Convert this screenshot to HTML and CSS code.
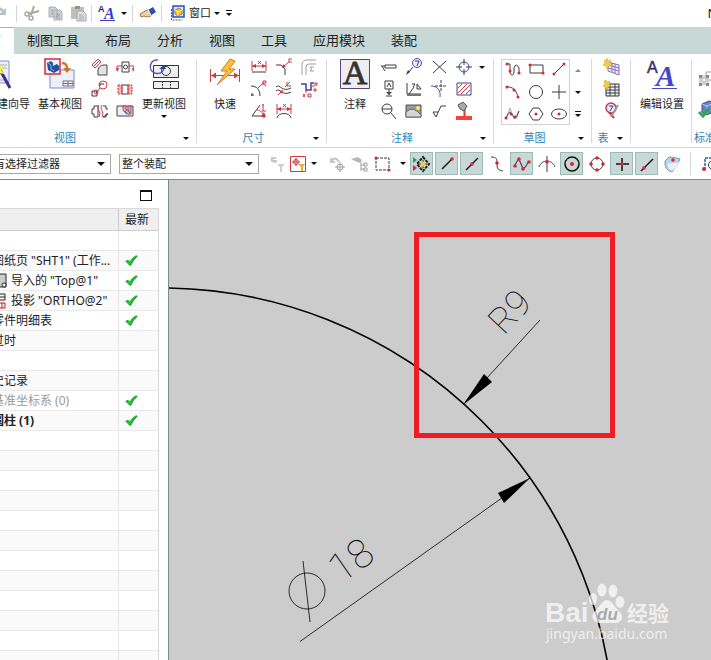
FILE: index.html
```html
<!DOCTYPE html>
<html lang="zh-CN">
<head>
<meta charset="utf-8">
<meta name="viewport" content="width=device-width, initial-scale=1">
<title>制图</title>
<link rel="stylesheet" href="styles.css">
</head>
<body>
<div class="app">
  <header class="quick">
    <button class="tool undo" aria-label="撤销"><svg width="18" height="18"><path d="M0 9C3 4 8 3 12 7" fill="none" stroke="#b9c2cc" stroke-width="3"/><path d="M7 11h8V4z" fill="#b9c2cc"/></svg></button>
    <i class="sep"></i>
    <button class="tool" aria-label="剪切"><svg width="18" height="18"><path d="M11 2 8 11M16 7 5 10" fill="none" stroke="#aaa79c" stroke-width="2"/><circle cx="4" cy="10" r="2" fill="none" stroke="#aaa79c" stroke-width="1.4"/><circle cx="8" cy="14" r="2" fill="none" stroke="#aaa79c" stroke-width="1.4"/></svg></button>
    <button class="tool" aria-label="复制"><svg width="18" height="18"><path d="M3 3h6l2 2v8H3zM8 6h6l2 2v8H8z" fill="#d0d1d4" stroke="#acaeb2"/><path d="M5 6h2M5 8h2M5 10h2M10 10h4M10 12h4M10 14h4" stroke="#9d9fa4"/></svg></button>
    <button class="tool" aria-label="粘贴"><svg width="18" height="18"><path d="M2 3h13v12H2z" fill="#c2bfb7"/><path d="M6 2h5v3H6z" fill="#96948f"/><path d="M8 7h6l3 3v7H8z" fill="#dddee1" stroke="#a6a8ad"/><path d="M10 11h4M10 13h5M10 15h5" stroke="#a6a8ad"/></svg></button>
    <i class="sep"></i>
    <button class="tool" aria-label="文本样式"><svg width="18" height="18"><path d="M2 16.500h15" stroke="#3a3ac8"/><text x="0" y="8" class="aa-small">A</text><text x="6" y="15" class="aa-big">A</text></svg></button>
    <button class="drop" aria-label="更多样式"></button>
    <i class="sep"></i>
    <button class="tool" aria-label="触摸"><svg width="18" height="18"><path d="m1 10 7-4 4 1v5l-4 1-3-1-3 1z" fill="#edcfa0" stroke="#a57b4b"/><path d="m9 6 5-3 3 5-6 4z" fill="#2e4fae"/><path d="m9 6 3 6" stroke="#eee" stroke-width="1.500"/></svg></button>
    <i class="sep"></i>
    <button class="tool" aria-label="窗口图标"><svg width="18" height="18"><path d="M3.500 5v11h11" fill="none" stroke="#555" stroke-dasharray="2 1"/><path d="M5 2h11v11H5z" fill="#dbe8ff" stroke="#1d4ee0" stroke-width="1.500"/><path d="m7 6 4-2 3 2v4l-4 2-3-2z" fill="#f5bd35" stroke="#b77c0b"/><path d="m7 6 3 2 4-2M10 8v4" stroke="#fff2ae" fill="none"/></svg></button>
    <button class="label">窗口</button>
    <button class="drop" aria-label="窗口菜单"></button>
    <button class="drop bar" aria-label="自定义"></button>
    <span class="app-name">NX</span>
  </header>

  <nav class="tabs">
    <a href="#" class="active" aria-label="主页">页</a>
    <a href="#">制图工具</a>
    <a href="#">布局</a>
    <a href="#">分析</a>
    <a href="#">视图</a>
    <a href="#">工具</a>
    <a href="#">应用模块</a>
    <a href="#">装配</a>
  </nav>

  <section class="ribbon">
    <div class="group g-view">
      <div class="body">
        <button class="big wizard"><svg width="32" height="32"><path d="M4 3h24v22H4z" fill="#eceff8" stroke="#8790c8"/><path d="M18 7h8M18 10h8M18 22h8" stroke="#aaa"/><path d="m18 10 11 20" stroke="#36348e" stroke-width="3"/><path d="m17 3 1 6 6-2-4 5 4 4-6-1-2 5-2-6-6-1 5-4z" fill="#fbf24a"/></svg><span>视图创建向导</span></button>
        <button class="big"><svg width="32" height="32"><path d="M6 12h24v18H6z" fill="#edf0fa" stroke="#8289c2"/><path d="M19 23h10v5H19zM19 25.500h10M24 23v5" fill="none" stroke="#777"/><path d="M1 1h15v15H1z" fill="#eef0f8" stroke="#d12d38" stroke-width="1.500"/><path d="m3 5 4-2 2 2v3l4-2 2 2v4l-5 3-6-3z" fill="#24509e"/><path d="m4 5 3 2v4l3 2" fill="none" stroke="#8bb1e9"/><path d="M18 5c4 0 5 2 5 6" fill="none" stroke="#cf722d" stroke-width="2.500"/><path d="M19 10h8l-4 5z" fill="#cf722d"/></svg><span>基本视图</span></button>
        <div class="smalls two">
          <button aria-label="投影视图"><svg width="18" height="18"><path class="r" d="m1 7 6-6 3 3-6 6zM3 8l5-5"/><path d="M7 17v-5q1-5 6-5h3v10z" fill="#e3e3e3" stroke="#444"/></svg></button>
          <button aria-label="剖视图"><svg width="18" height="18"><path class="k" d="M6 4h7v10H6z"/><circle class="k" cx="9.500" cy="9" r="2"/><path class="r" d="M1 13V8h5M18 13V8h-5"/><path d="M0 10h3l-1.500 4zM16 10h3l-2 4z" fill="#cf3c43"/></svg></button>
          <button aria-label="局部放大图"><svg width="18" height="18"><circle class="r" cx="12" cy="5" r="4"/><path class="r" d="m9 8-4 5"/><path class="k" d="M1 11h5v5H1zM9 6V4h4"/><circle cx="5" cy="12" r="2" class="r"/></svg></button>
          <button aria-label="断开视图"><svg width="18" height="18"><path d="M2 5h4v9H2zM12 5h4v9h-4z" fill="#f5b3b2" stroke="#cc333b" stroke-dasharray="2 1"/><path class="k" d="M6 5h6M6 14h6"/><path class="r" d="M6 5v9M12 5v9"/></svg></button>
          <button aria-label="断裂视图"><svg width="18" height="18"><path class="k" d="M1 7h2V4h4v11H3v-3H1zM17 7h-2V4h-3M12 15h3v-3h2z"/><path class="r" d="M8 3c-3 5 3 6 0 12M11 3c-3 5 3 6 0 12"/></svg></button>
          <button aria-label="局部剖视图"><svg width="18" height="18"><path d="M1 4h16v10H1z" fill="#eee" stroke="#444"/><path d="M7 4c-1 5 3 9 8 8V4h-3v4h-2V4z" fill="#b7bfe9" stroke="#cb353c"/><path d="m9 9 2 3M12 8l2 3" stroke="#374896"/></svg></button>
        </div>
        <button class="big menu"><svg width="32" height="32"><path d="M5.500 7.500h25v12h-25zM5.500 23.500h25v7h-25z" fill="#eee" stroke="#333"/><circle class="k" cx="18" cy="13" r="4.500"/><path class="k" d="M14.500 23v7M22.500 23v7" stroke-dasharray="2 1"/><path d="M10 2C2 1-1 12 7 15c6 2 9-2 9-6" fill="none" stroke="#5d56bc" stroke-width="1.500"/><path d="M11 11h7l-2-4z" fill="#26438e"/></svg><span>更新视图</span></button>
      </div>
      <div class="foot"><span>视图</span><button class="drop" aria-label="视图选项"></button></div>
    </div>

    <div class="group g-dim">
      <div class="body">
        <button class="big"><svg width="32" height="32"><path class="r" d="M1.500 11v13M30.500 11v13M2 17.500h28"/><path d="m2 17.500 5-3v6zM30 17.500l-5-3v6z" fill="#ce3c44"/><path d="M21 1 12 13h6L8 27l18-16h-6l6-8z" fill="#fbc42e" stroke="#d4773b"/></svg><span>快速</span></button>
        <div class="smalls three">
          <button aria-label="线性"><svg width="18" height="18"><path class="r" d="M2 3v10M16 3v10M2 8h14"/><path d="m2 8 4-2v4zM16 8l-4-2v4z" fill="#ca333b"/><path class="r" d="m8 3 3 3m0-3L8 6"/><path class="k" d="M2 14h14"/></svg></button>
          <button aria-label="倒斜角"><svg width="18" height="18"><path class="k" d="M1 7h5l4 4v6"/><path class="r" d="m8 9 6-5h3M17 1h-3v3"/><path d="m7 10 1-4 3 3z" fill="#ca333b"/></svg></button>
          <button aria-label="厚度"><svg width="18" height="18"><path class="g" d="M2 17V7q0-5 5-5h9M6 17V9q0-3 3-3h7M14 9h-4l2 2-2 2h4"/></svg></button>
          <button aria-label="径向"><svg width="18" height="18"><path class="k" d="M1 6c6 0 9 4 9 10M2 13v3M1 15h3"/><path class="r" d="m8 8 5-5M13 5V1h3v2h-3l3 3"/></svg></button>
          <button aria-label="弧长"><svg width="18" height="18"><path class="k" d="M1 7c4-4 6 6 15 1M1 11c4-4 6 6 15 1"/><path class="r" d="m3 15 4-4m3-4 5-5M12 2v4h4"/><path d="m5 11 3-1-1 4z" fill="#ca333b"/></svg></button>
          <button aria-label="坐标"><svg width="18" height="18"><path d="M1 4h5v6h5V3h3" fill="none" stroke="#463fa4" stroke-width="1.500"/><path class="r" d="M12 6h3M6 10v3M11 7v3M3 14l2 3m0-3-2 3M8 14h3v3H8zM15 3h2v2h-2zM14 9h2v2h-2z"/></svg></button>
          <button aria-label="角度"><svg width="18" height="18"><path class="k" d="M10 3 2 14h11"/><path class="r" d="M7 8c4 0 6 3 7 8M13 2v7M12 3h2M12 9h4"/><path d="m11 15 3-5 2 5z" fill="#ca333b"/></svg></button>
          <button aria-label="弧长尺寸"><svg width="18" height="18"><path class="k" d="M2 16c1-6 13-6 14 0"/><path class="r" d="M2 2v10M16 2v10M2 7h14M8 2l3 3m0-3L8 5"/><path d="m2 7 4-2v4zM16 7l-4-2v4z" fill="#ca333b"/></svg></button>
        </div>
      </div>
      <div class="foot"><span>尺寸</span><button class="drop" aria-label="尺寸选项"></button></div>
    </div>

    <div class="group g-note">
      <div class="body">
        <button class="big"><svg width="32" height="32"><path d="M1.500 1.500h29v29h-29z" fill="#eee" stroke="#554580"/><text x="16" y="26" text-anchor="middle" class="serif-a">A</text></svg><span>注释</span></button>
        <div class="smalls four">
          <button aria-label="指引线"><svg width="18" height="18"><path class="k" d="M5 7h11v3H5zM1 8h4M2 8l3 5"/></svg></button>
          <button aria-label="符号标注"><svg width="18" height="18"><circle cx="12" cy="5" r="4.500" fill="#eeeaff" stroke="#5549a0"/><path d="M10 3h4l-2 5" fill="none" stroke="#443591"/><path class="k" d="m8 9-5 6"/><path d="m1 17 2-5 2 2z" fill="#333"/></svg></button>
          <button aria-label="目标点"><svg width="18" height="18"><path class="k" d="m3 3 13 12M16 3 3 15"/></svg></button>
          <button aria-label="中心标记"><svg width="18" height="18"><circle cx="9" cy="9" r="5" fill="none" stroke="#2b53a3"/><path class="k" d="M9 1v6M9 11v6M1 9h6M11 9h6"/></svg></button>
          <button class="drop" aria-label="更多中心线"></button>
          <button aria-label="基准特征"><svg width="18" height="18"><path class="k" d="M5 1h8v8H5zM9 9v6M6 16h6"/><path d="M6 12h6l-3 3z" fill="#444"/><path class="k" d="m7 7 2-4 2 4"/></svg></button>
          <button aria-label="焊接符号"><svg width="18" height="18"><path class="k" d="M2 3v11h14M4 14l5-7M7 4h3l-2 3M12 9V4l4 5z"/><path d="M2 15h14" stroke="#777" stroke-width="2"/></svg></button>
          <button aria-label="相交符号"><svg width="18" height="18"><path d="M1 6c6 0 10 4 9 11" fill="none" stroke="#315bb0"/><path class="k" d="M11 0v12M5 6h12" stroke-dasharray="3 1"/></svg></button>
          <button aria-label="剖面线"><svg width="18" height="18"><path d="M2 3h14v12H2z" fill="#fff" stroke="#4b3e91"/><path class="r" d="m3 8 4-4M3 13l9-9M6 14 15 5M11 14l4-4"/></svg></button>
          <i></i>
          <button aria-label="放大"><svg width="18" height="18"><circle class="k" cx="7" cy="7" r="5"/><path class="k" d="M2 7h10m-1 4 5 6"/></svg></button>
          <button aria-label="图像"><svg width="18" height="18"><path d="M1 3h15v12H1z" fill="#999" stroke="#555"/><path d="M1 10q7-7 15 3v2H1z" fill="#d5d5d5" stroke="#666"/><circle cx="13" cy="6" r="2" fill="#ffec58"/></svg></button>
          <button aria-label="表面粗糙度"><svg width="18" height="18"><path class="k" d="m3 10 3 5L11 4h5M3 10h5"/></svg></button>
          <button aria-label="颜色"><svg width="18" height="18"><path d="M1 14h16v4H1z" fill="#f34340"/><path d="M9 7h1v7H9z" fill="#e33" stroke="#e33"/><path d="m3 3 5-3 4 4-3 5-4-2z" fill="#aaa" stroke="#555"/></svg></button>
        </div>
      </div>
      <div class="foot"><span>注释</span><button class="drop" aria-label="注释选项"></button></div>
    </div>

    <div class="group g-sketch">
      <div class="body">
        <div class="gallery">
          <button aria-label="轮廓"><svg width="18" height="18"><path class="k" d="M3 3h3v9q3 5 4-1V7q2-6 5 0v6"/><circle class="d" cx="3" cy="3" r="1.500"/><circle class="d" cx="6" cy="10" r="1.500"/><circle class="d" cx="15" cy="12" r="1.500"/></svg></button>
          <button aria-label="矩形"><svg width="18" height="18"><path class="k" d="M3 4h13v8H3z"/><circle class="d" cx="3" cy="4" r="1.500"/><circle class="d" cx="16" cy="12" r="1.500"/></svg></button>
          <button aria-label="直线"><svg width="18" height="18"><path class="k" d="M4 13 14 3"/><circle class="d" cx="4" cy="13" r="1.500"/><circle class="d" cx="14" cy="3" r="1.500"/></svg></button>
          <button aria-label="圆弧"><svg width="18" height="18"><path class="k" d="M2 4c7-1 11 4 12 11"/><circle class="d" cx="3" cy="4" r="1.500"/><circle class="d" cx="10" cy="7" r="1.500"/><circle class="d" cx="14" cy="14" r="1.500"/></svg></button>
          <button aria-label="圆"><svg width="18" height="18"><circle class="k" cx="9" cy="9" r="6.500"/></svg></button>
          <button aria-label="点"><svg width="18" height="18"><path class="k" d="M9 2v14M2 9h14"/></svg></button>
          <button aria-label="样条"><svg width="18" height="18"><path d="M2 14 6 3l4 11 5-8" fill="none" stroke="#aaa"/><path class="k" d="M2 14c4-12 5-5 8-2s3-2 5-6"/><circle class="d" cx="2" cy="13" r="1.500"/><circle class="d" cx="7" cy="9" r="1.500"/><circle class="d" cx="11" cy="12" r="1.500"/></svg></button>
          <button aria-label="多边形"><svg width="18" height="18"><path class="k" d="M6 3h6l4 6-4 6H6L2 9z"/><circle class="d" cx="9" cy="9" r="1.500"/></svg></button>
          <button aria-label="椭圆"><svg width="18" height="18"><ellipse class="k" cx="9" cy="9" rx="7.500" ry="5"/><circle class="d" cx="9" cy="9" r="1.500"/></svg></button>
        </div>
        <div class="scroller"><button class="drop up" aria-label="向上"></button><button class="drop" aria-label="向下"></button><button class="drop bar" aria-label="展开"></button></div>
      </div>
      <div class="foot"><span>草图</span><button class="drop" aria-label="草图选项"></button></div>
    </div>

    <div class="group g-table">
      <div class="body">
        <div class="smalls one">
          <button aria-label="表格注释"><svg width="18" height="18"><path d="m5 4 11 3v10L5 13z" fill="#eeeaf8" stroke="#8170a5"/><path d="m5 7 11 3M5 10l11 3M9 5v9M12 6v10" stroke="#8878b1"/><path class="star" d="m4 0 1 3 3-1-1 3 2 2-3 1-2 3-1-3-3-1 2-2-1-3 2 1z"/></svg></button>
          <button aria-label="零件明细表"><svg width="18" height="18"><path d="M3 4h13v12H3z" fill="#eaf1fb" stroke="#333"/><path class="k" d="M3 7h13M3 10h13M3 13h13M7 4v12M12 4v12"/><path class="star" d="m3 0 1 2 3-1-1 3 2 2-3 1-1 3-2-3-2-1 2-2-1-3z"/></svg></button>
          <button aria-label="自动符号标注"><svg width="18" height="18"><circle cx="8" cy="6" r="5" fill="#eeeaf7" stroke="#bf3d47" stroke-width="1.500"/><path d="M6 4h4L7 9" fill="none" stroke="#443591"/><path d="m6 10 5 6" stroke="#c23d45" stroke-width="2"/><path d="m15 3-7 12" stroke="#a79297" stroke-width="2"/></svg></button>
        </div>
      </div>
      <div class="foot"><span>表</span><button class="drop" aria-label="表选项"></button></div>
    </div>

    <div class="group g-edit">
      <div class="body">
        <button class="big"><svg width="32" height="32"><path d="M6 30.500h25" stroke="#4644cc"/><text x="1" y="15" class="edit-small">A</text><text x="10" y="28" class="edit-big">A</text></svg><span>编辑设置</span></button>
      </div>
      <div class="foot"></div>
    </div>

    <div class="group g-std">
      <div class="body">
        <div class="smalls std">
          <button aria-label="对象"><svg width="18" height="18"><path class="g" d="M2 6h8v8H2zM4 8h4v4H4zM8 5V2h9v8h-6"/><path d="M1 5h3v3H1zM8 5h3v3H8zM1 13h3v3H1zM8 13h3v3H8z" fill="#888"/></svg></button>
          <button aria-label="检查"><svg width="18" height="18"><path d="m4 4 7-3 5 2v9l-8 3-4-3z" fill="#6484cc" stroke="#354b91"/><path d="m4 4 5 2 7-3M9 6v8" fill="none" stroke="#b8c7ee"/><path d="m1 12 4 4 6-8" fill="none" stroke="#35a54c" stroke-width="3"/></svg></button>
        </div>
      </div>
      <div class="foot"><span>标准化工具</span></div>
    </div>
  </section>

  <section class="filters">
    <div class="combo first"><select aria-label="选择过滤器"><option>没有选择过滤器</option></select></div>
    <div class="combo second"><select aria-label="选择范围"><option>整个装配</option></select></div>
    <button class="filter" aria-label="重置过滤器"><svg width="18" height="18"><path class="p" d="M8 3H4v3h5M4 6l4 1" stroke-width="2"/><path d="M9 9h8l-3 3v5h-2v-5z" fill="#d0d0d0"/></svg></button>
    <button class="filter" aria-label="过滤方式"><svg width="18" height="18"><path d="M1.500 1.500h15v15h-15z" fill="#fff" stroke="#d03640"/><circle cx="7" cy="7" r="2.500" class="r"/><path class="r" d="M7 3v8M3 7h8"/><path d="M9 9h7l-2 3v4h-2v-4z" fill="#edae3c"/></svg></button>
    <button class="drop gap" aria-label="过滤选项"></button>
    <button class="filter" aria-label="返回"><svg width="18" height="18"><path class="p" d="M2 3v4h4M2 7q4-7 8 0" stroke-width="2"/><circle cx="11" cy="12" r="3" class="g"/><path class="g" d="M11 7v10M6 12h10"/></svg></button>
    <button class="filter" aria-label="查找"><svg width="18" height="18"><path d="m1 4 7-2 4 3-2 3-5-2z" fill="#b7b7b7"/><path class="g" d="M11 7v9M11 10h4M11 14h4M14 8h3v3h-3zM14 13h3v3h-3z"/></svg></button>
    <button class="filter wide" aria-label="矩形选择"><svg width="18" height="18"><path class="k" d="M2 3h13v12H2z" stroke-dasharray="3 1"/><circle class="d" cx="2" cy="3" r="1.500"/><circle class="d" cx="15" cy="15" r="1.500"/></svg></button>
    <button class="drop" aria-label="选择方式"></button>
    <button class="snap on" aria-label="启用捕捉"><svg width="18" height="18"><path d="m0 2 4 3-4 3z" fill="#1fa839"/><path d="m0 10 4 3-4 3z" fill="#d42a2a"/><path d="m10 2 6 7-6 7-6-7z" fill="none" stroke="#222" stroke-width="2" stroke-dasharray="3 1"/><path d="M10 5v8M6 9h8" stroke="#222"/><circle cx="10" cy="9" r="2.500" fill="#f4ce32"/></svg></button>
    <button class="snap on" aria-label="端点"><svg width="18" height="18"><path class="b" d="M4 14 14 4"/><circle class="d" cx="14" cy="4" r="1.800"/></svg></button>
    <button class="snap on" aria-label="中点"><svg width="18" height="18"><path class="b" d="M3 15 15 3"/><circle class="d" cx="9" cy="9" r="1.800"/></svg></button>
    <button class="snap" aria-label="控制点"><svg width="18" height="18"><path class="k" d="M3 2c6 0 6 2 6 7s1 6 6 7"/><circle class="d" cx="9" cy="8" r="1.800"/></svg></button>
    <button class="snap on" aria-label="极点"><svg width="18" height="18"><path d="m2 10 4-7 4 12 6-9" fill="none" stroke="#9048c5"/><path class="k" d="M2 11c3-9 4-6 7 0s5-3 7-5"/><circle class="d" cx="2" cy="11" r="1.800"/><circle class="d" cx="6" cy="4" r="1.800"/><circle class="d" cx="10" cy="14" r="1.800"/><circle class="d" cx="16" cy="7" r="1.800"/></svg></button>
    <button class="snap" aria-label="交点"><svg width="18" height="18"><path class="k" d="M9 1v16M1 12C4 4 14 4 17 12"/><circle class="d" cx="9" cy="7" r="1.800"/></svg></button>
    <button class="snap on" aria-label="圆心"><svg width="18" height="18"><circle class="b" cx="9" cy="9" r="7"/><circle class="d" cx="9" cy="9" r="2"/></svg></button>
    <button class="snap" aria-label="象限点"><svg width="18" height="18"><circle class="k" cx="9" cy="9" r="6"/><circle class="d" cx="9" cy="3" r="1.800"/><circle class="d" cx="15" cy="9" r="1.800"/><circle class="d" cx="9" cy="15" r="1.800"/><circle class="d" cx="3" cy="9" r="1.800"/></svg></button>
    <button class="snap on" aria-label="现有点"><svg width="18" height="18"><path class="b" d="M9 3v13M3 9h13"/><circle class="d" cx="9" cy="9" r="1.800"/></svg></button>
    <button class="snap on" aria-label="曲线上的点"><svg width="18" height="18"><path class="b" d="M3 16 15 4"/><circle class="d" cx="6" cy="13" r="1.800"/></svg></button>
    <button class="snap" aria-label="面上的点"><svg width="18" height="18"><path d="M2 6 6 2q6 0 11 2l-4 8-4 5Q1 15 2 6z" fill="#bdd2ef" stroke="#7695c7"/><path d="M5 8q5 1 11-1l-3 6-4 3q-5-2-4-8z" fill="#e7f0fb"/><circle class="d" cx="10" cy="5" r="1.800"/></svg></button>
    <i class="divider"></i>
    <button class="snap" aria-label="缩放"><svg width="18" height="18"><path d="M4 15V3h14" fill="none" stroke="#3355bb" stroke-width="1.500" stroke-dasharray="3 1"/><circle class="k" cx="12" cy="10" r="4.500"/><circle class="d" cx="3" cy="14" r="2"/></svg></button>
  </section>

  <main>
    <aside class="navigator">
      <div class="panel-head"><button aria-label="最大化"></button></div>
      <table>
        <thead><tr><th aria-label="名称"></th><th>最新</th></tr></thead>
        <tbody>
          <tr><td></td><td></td></tr>
          <tr><td><span class="name n1">图纸页 "SHT1" (工作...</span></td><td><svg class="ok" viewBox="0 0 16 16"><use href="#tick"/></svg></td></tr>
          <tr><td><span class="name n2"><svg width="8" height="16"><path d="M0 1h6v13H0" fill="#ccc" stroke="#222"/><circle cx="4" cy="12" r="2" fill="#fff" stroke="#222"/></svg>导入的 "Top@1"</span></td><td><svg class="ok" viewBox="0 0 16 16"><use href="#tick"/></svg></td></tr>
          <tr><td><span class="name n2"><svg width="8" height="16"><path d="M0 1h5v6H0M0 4h5" fill="#fff" stroke="#222"/><path d="M0 10h5v5H0M2 10v5" fill="#fff" stroke="#b61919"/></svg>投影 "ORTHO@2"</span></td><td><svg class="ok" viewBox="0 0 16 16"><use href="#tick"/></svg></td></tr>
          <tr><td><span class="name n3">零件明细表</span></td><td><svg class="ok" viewBox="0 0 16 16"><use href="#tick"/></svg></td></tr>
          <tr><td><span class="name n3">过时</span></td><td></td></tr>
          <tr><td></td><td></td></tr>
          <tr><td><span class="name n3">史记录</span></td><td></td></tr>
          <tr><td><span class="name n3 dim">基准坐标系 (0)</span></td><td><svg class="ok" viewBox="0 0 16 16"><use href="#tick"/></svg></td></tr>
          <tr><td><span class="name n1 strong">圆柱 (1)</span></td><td><svg class="ok" viewBox="0 0 16 16"><use href="#tick"/></svg></td></tr>
          <tr><td></td><td></td></tr><tr><td></td><td></td></tr><tr><td></td><td></td></tr><tr><td></td><td></td></tr>
          <tr><td></td><td></td></tr><tr><td></td><td></td></tr><tr><td></td><td></td></tr><tr><td></td><td></td></tr>
          <tr><td></td><td></td></tr><tr><td></td><td></td></tr><tr><td></td><td></td></tr><tr><td></td><td></td></tr>
        </tbody>
      </table>
      <svg width="0" height="0" class="defs"><defs><g id="tick"><path d="M1 9q3-3 5 1 3-6 8-8l1 1q-5 4-8 11H6z" fill="#1fcc35" stroke="#119123"/></g></defs></svg>
    </aside>
    <div class="sheet">
      <svg class="drawing" role="img" aria-label="半径与直径标注">
        <g transform="translate(-169 -180)">
          <circle cx="160.800" cy="741.500" r="453.600" fill="none" stroke="#000" stroke-width="1.600"/>
          <path class="thin" d="M540 320 465 402M300 641.500 530 478"/>
          <path d="m463 405 21-31 8 8zM530 478l-32 15 6 10z"/>
          <text class="cad r9" transform="translate(504 336) rotate(-47)">R9</text>
          <circle class="thin" cx="307" cy="591" r="18"/>
          <path class="thin" d="m303 561 7 61"/>
          <text class="cad" transform="translate(341 584) rotate(-35)">18</text>
          <path d="M416.500 234.500h196v201h-196z" fill="none" stroke="#ef1c24" stroke-width="5"/>
          <g class="mark">
            <text x="545" y="622" class="bai">Bai</text>
            <ellipse cx="593" cy="599" rx="4" ry="6"/><ellipse cx="602" cy="590" rx="4.500" ry="6.500"/><ellipse cx="613" cy="591" rx="4.500" ry="6.500"/><ellipse cx="620" cy="602" rx="4.500" ry="6"/>
            <path d="M607 600c-5 0-7 7-12 11-5 5-2 12 5 12h15c8 0 9-7 4-12-5-4-7-11-12-11z"/>
            <text x="597" y="620" class="du">du</text>
            <text x="627" y="621" class="jy">经验</text>
            <text x="546" y="639" class="url">jingyan.baidu.com</text>
          </g>
        </g>
      </svg>
    </div>
  </main>
</div>
</body>
</html>
```
FILE: styles.css
```css
* { box-sizing: border-box; }
body { margin: 0; background: #fff; color: #222; font: 12px/16px "Noto Sans", "Noto Sans CJK SC", sans-serif; }
button { display: flex; align-items: center; justify-content: center; flex: none; margin: 0; padding: 0; border: 0; background: none; color: inherit; font: inherit; }
svg { display: block; flex: none; }
a { color: inherit; text-decoration: none; }
.app { display: flex; flex-direction: column; height: 100vh; overflow: hidden; }

.k, .r, .g, .b, .p { fill: none; stroke: #3c3c3c; }
.r { stroke: #cc3b43; }
.g { stroke: #a0a0a0; }
.b { stroke: #111; stroke-width: 1.5; }
.p { stroke: #c6c6c6; }
.d { fill: #d8282c; }
.star { fill: #f4ca3e; stroke: #cfa02c; stroke-width: .5; }

.drop { width: 12px; height: 12px; }
.drop::before { content: ""; border: 3px solid transparent; border-top-color: #111; border-bottom: 0; }
.drop.bar { flex-direction: column; gap: 2px; }
.drop.bar::before { order: 2; }
.drop.bar::after { content: ""; width: 6px; height: 1px; background: #111; }
.drop.up::before { border-top: 0; border-bottom: 3px solid #888; }

.quick { display: flex; align-items: center; flex: none; height: 27px; padding-bottom: 1px; font-size: 11px; }
.tool { width: 23px; height: 24px; }
.tool.undo { width: 14px; justify-content: flex-end; overflow: hidden; padding-right: 5px; }
.sep { width: 1px; height: 17px; margin: 0 3px 0 2px; background: #d4d4d4; }
.quick .label { margin-left: 1px; }
.app-name { margin-left: auto; margin-right: -14px; font-size: 13px; }
.aa-small { font: bold 9px "Liberation Sans", sans-serif; fill: #2a2568; }
.aa-big { font: italic bold 16px "Liberation Serif", serif; fill: #3a3ac8; }

.tabs { display: flex; flex: none; height: 27px; background: #c8d8d6; font-size: 13px; line-height: 27px; gap: 26px; }
.tabs a { white-space: nowrap; }
.tabs .active { width: 14px; margin-right: -13px; background: #fff; color: #2b9bc9; text-indent: -12px; overflow: hidden; border-top: 1px solid #a9b4b3; }

.ribbon { display: flex; flex: none; height: 94px; border-bottom: 1px solid #d6d6d6; overflow: hidden; font-size: 11px; }
.group { position: relative; display: flex; flex-direction: column; flex: none; }
.group::after { content: ""; position: absolute; right: 0; top: 5px; bottom: 4px; width: 1px; background: #d9d9d9; }
.body { display: flex; align-items: flex-start; flex: 1; padding-top: 2px; }
.foot { display: flex; align-items: center; justify-content: center; height: 18px; color: #2b84b5; }
.foot span { flex: 1; text-align: center; white-space: nowrap; }
.foot .drop { margin-right: 5px; }
.big { flex-direction: column; width: 50px; padding-top: 2px; white-space: nowrap; gap: 6px; line-height: 16px; }
.big.wizard { width: 66px; margin-left: -36px; }
.big.menu::after { content: ""; margin-top: -3px; border: 3px solid transparent; border-top-color: #111; border-bottom: 0; }
.smalls { display: grid; grid-auto-rows: 22px; }
.smalls button { height: 22px; }
.two { grid-template-columns: 25px 25px; }
.three { grid-template-columns: 25px 25px 25px; }
.four { grid-template-columns: 25px 25px 25px 25px 12px; }
.one { grid-template-columns: 26px; }
.g-view { width: 197px; }
.g-view .body { gap: 2px; }
.g-view .big:nth-child(2) { margin-left: 3px; }
.g-view .foot { margin-left: -50px; }
.g-dim { width: 130px; }
.g-dim .body { padding-left: 3px; }
.g-dim .smalls { margin-left: -4px; }
.g-note { width: 167px; }
.g-note .body { padding-left: 3px; }
.g-note .smalls { margin-left: -4px; }
.g-sketch { width: 98px; }
.g-sketch .body { padding: 5px 0 0 7px; gap: 2px; }
.gallery { display: grid; grid-template: repeat(3, 22px) / repeat(3, 23px); width: 69px; height: 66px; box-shadow: inset 0 0 0 1px #d2d2d2; }
.scroller { display: grid; grid-auto-rows: 22px; align-items: center; }
.g-table { width: 39px; }
.g-table .body { padding-left: 7px; }
.g-edit { width: 61px; }
.g-edit .body { padding-left: 6px; }
.g-std::after { display: none; }
.g-std .body { padding: 10px 0 0 6px; }
.std { grid-auto-rows: 30px; align-items: center; }
.g-std .foot { padding-left: 2px; }
.serif-a { font: 34px "Liberation Serif", serif; fill: #333; stroke: #333; stroke-width: .8; }
.edit-small { font: 16px "Liberation Sans", sans-serif; fill: #3b306f; stroke: #3b306f; stroke-width: .5; }
.edit-big { font: italic bold 29px "Liberation Serif", serif; fill: #4644cc; }

.filters { display: flex; align-items: center; flex: none; height: 32px; border-bottom: 1px solid #7f8b8e; overflow: hidden; font-size: 11px; }
.combo { position: relative; flex: none; height: 20px; border: 1px solid #a9a9a9; background: #fff; }
.combo::after { content: ""; position: absolute; right: 5px; top: 7px; border: 4px solid transparent; border-top-color: #111; border-bottom: 0; pointer-events: none; }
.combo select { width: 100%; height: 18px; padding: 0 2px; border: 0; appearance: none; background: none; color: inherit; font: inherit; line-height: 18px; }
.combo.first { width: 131px; margin-left: -20px; }
.combo.second { width: 140px; margin: 0 7px 0 8px; }
.filter { width: 21px; height: 23px; }
.filter.wide { width: 28px; }
.snap { width: 23px; height: 23px; margin-right: 2px; }
.snap.on { background: #c8d8d6; border: 1px solid #9dbab5; }
.filters .drop { margin-right: 1px; }
.filters .drop.gap { margin-right: 7px; }
.divider { flex: none; width: 1px; height: 23px; margin: 0 7px 0 5px; background: #d6d6d6; }

main { display: flex; flex: 1; min-height: 0; }
.navigator { flex: none; width: 169px; border-right: 1px solid #7f8b8e; overflow: hidden; }
.panel-head { display: flex; justify-content: flex-end; height: 28px; padding: 10px 16px 0 0; }
.panel-head button { width: 12px; height: 11px; border: 1px solid #111; border-top-width: 2px; }
table { width: 159px; border-collapse: separate; border-spacing: 0; table-layout: fixed; border-top: 1px solid #d8d8d8; border-right: 1px solid #d8d8d8; }
th, td { height: 20px; padding: 0; overflow: hidden; border-right: 1px solid #e6e6e6; border-bottom: 1px solid #e9e9e9; line-height: 19px; white-space: nowrap; text-align: left; }
th { height: 22px; background: #efefef; border-color: #cecece; font-weight: normal; }
th:first-child { width: 119px; }
th:last-child { padding-left: 6px; }
td:last-child, th:last-child { border-right: 0; }
td:last-child { padding-left: 6px; }
tbody tr:nth-child(even) { background: #fafafa; }
.name { display: flex; align-items: center; height: 19px; }
.n1 { margin-left: -8px; }
.n2 { gap: 3px; }
.n3 { margin-left: -8px; }
.strong { font-weight: bold; }
.dim { color: #999; }
.ok { width: 13px; height: 13px; }
.defs { position: absolute; }

.sheet { flex: 1; min-width: 0; background: #ccc; overflow: hidden; }
.drawing { width: 100%; height: 100%; }
.thin { fill: none; stroke: #000; stroke-width: .8; }
.cad { font: 100 40px Roboto, Inter, sans-serif; fill: #111; }
.r9 { font-size: 36px; }
.mark { fill: #fff; fill-opacity: .7; }
.bai { font: bold 28px "Liberation Sans", sans-serif; }
.du { font: italic bold 17px "Liberation Sans", sans-serif; fill: #aaa; fill-opacity: 1; }
.jy { font: bold 21px "Noto Sans CJK SC", sans-serif; }
.url { font: 14px "Noto Sans", sans-serif; }
```
